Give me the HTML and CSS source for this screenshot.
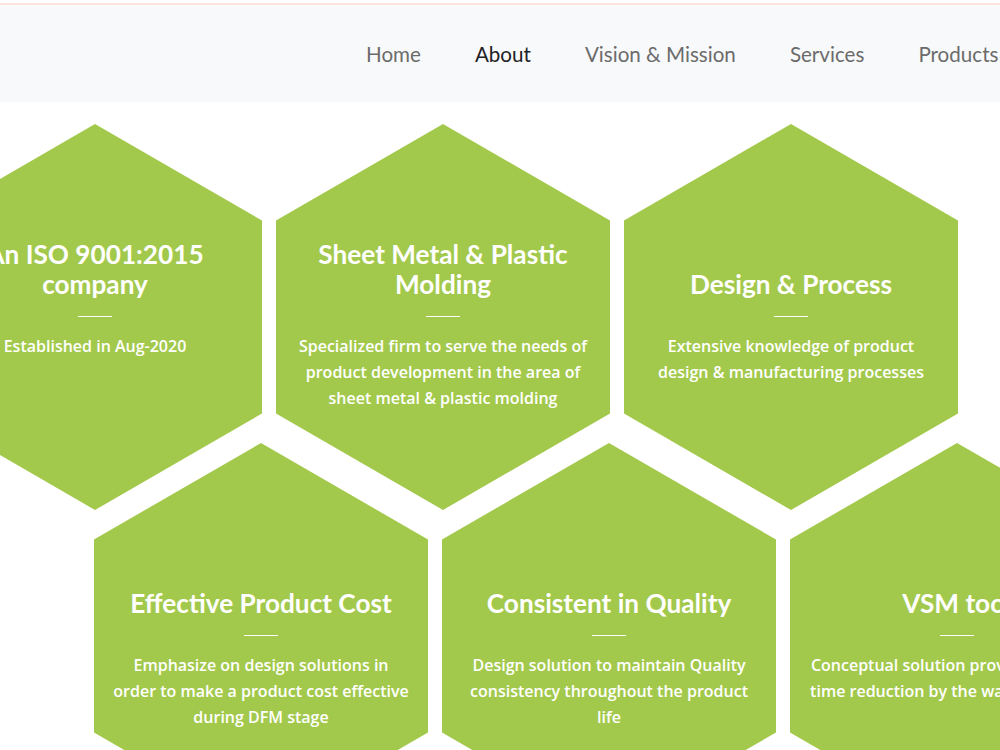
FILE: index.html
```html
<!DOCTYPE html>
<html lang="en">
<head>
    <meta charset="UTF-8">
    <meta name="viewport" content="width=device-width, initial-scale=1.0">
    <title>About</title>
    <link rel="stylesheet" href="styles.css">
</head>
<body>
    <header class="navbar">
        <nav class="nav-links">
            <a href="#">Home</a>
            <a href="#" class="active">About</a>
            <a href="#">Vision &amp; Mission</a>
            <a href="#">Services</a>
            <a href="#">Products</a>
        </nav>
    </header>

    <section class="hex-grid">
        <div class="hex-row first">
            <div class="hex">
                <h3>An ISO 9001:2015 company</h3>
                <span class="line"></span>
                <p>Established in Aug-2020</p>
            </div>
            <div class="hex">
                <h3>Sheet Metal &amp; Plastic Molding</h3>
                <span class="line"></span>
                <p>Specialized firm to serve the needs of product development in the area of sheet metal &amp; plastic molding</p>
            </div>
            <div class="hex">
                <h3>Design &amp; Process</h3>
                <span class="line"></span>
                <p>Extensive knowledge of product design &amp; manufacturing processes</p>
            </div>
        </div>
        <div class="hex-row second">
            <div class="hex">
                <h3>Effective Product Cost</h3>
                <span class="line"></span>
                <p>Emphasize on design solutions in order to make a product cost effective during DFM stage</p>
            </div>
            <div class="hex">
                <h3>Consistent in Quality</h3>
                <span class="line"></span>
                <p>Design solution to maintain Quality consistency throughout the product life</p>
            </div>
            <div class="hex">
                <h3>VSM tool</h3>
                <span class="line"></span>
                <p>Conceptual solution provides the lead time reduction by the way of VSM tool</p>
            </div>
        </div>
    </section>
</body>
</html>
```

FILE: styles.css
```css
body {
    margin: 0;
    font-family: Lato, "Open Sans", sans-serif;
    background: #fff;
    overflow: hidden;
    width: 1000px;
    height: 750px;
}
.navbar {
    margin-top: 3px;
    border-top: 2px solid #fde3de;
    background-color: #f8f9fa;
    height: 97px;
    display: flex;
    align-items: center;
}
.nav-links {
    display: flex;
    gap: 54px;
    margin-left: 366px;
    white-space: nowrap;
}
.nav-links a {
    color: #6b6b6b;
    text-decoration: none;
    font-size: 20.6px;
}
.nav-links a.active {
    color: #1f2226;
}
.hex-grid {
    padding-top: 22px;
}
.hex-row {
    display: flex;
    gap: 14px;
}
.hex-row.first {
    margin-left: -72px;
}
.hex-row.second {
    margin-left: 94px;
    margin-top: -67px;
}
.hex {
    flex: 0 0 334px;
    height: 386px;
    background-color: #a3c94c;
    clip-path: polygon(50% 0, 100% 25%, 100% 75%, 50% 100%, 0 75%, 0 25%);
    color: #fff;
    text-align: center;
    box-sizing: border-box;
    padding: 115px 16px 0;
    display: flex;
    flex-direction: column;
    align-items: center;
}
.hex h3 {
    margin: 0;
    height: 60px;
    font-size: 26.2px;
    line-height: 30px;
    font-weight: 700;
    display: flex;
    align-items: flex-end;
    justify-content: center;
}
.hex .line {
    display: block;
    width: 34px;
    height: 1px;
    background: #fff;
    margin-top: 17px;
}
.hex p {
    margin: 16px 0 0;
    max-width: 300px;
    font-family: "Open Sans", sans-serif;
    font-size: 16px;
    line-height: 26px;
    font-weight: 600;
}
```
